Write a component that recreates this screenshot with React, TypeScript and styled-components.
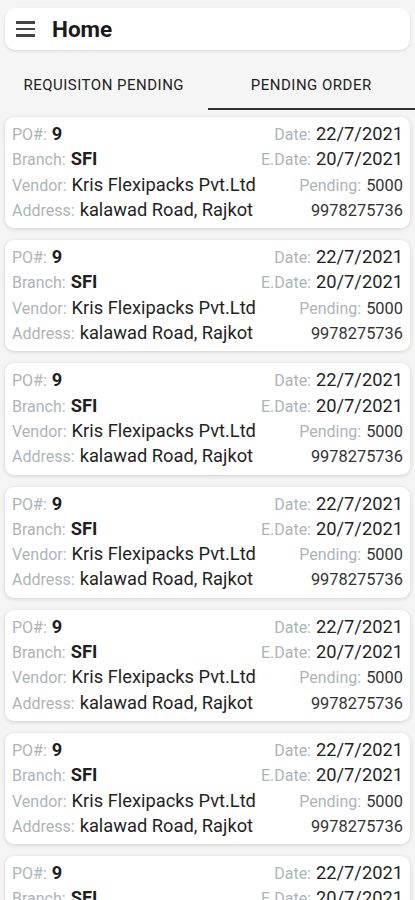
import styled, { createGlobalStyle } from "styled-components";

const GlobalStyle = createGlobalStyle`
    body {
        margin: 0;
        background: #f5f5f5;
        font-family: Roboto, "Liberation Sans", sans-serif;
    }
`;

type Order = {
    po: string;
    branch: string;
    vendor: string;
    address: string;
    date: string;
    eDate: string;
    pending: string;
    phone: string;
};

const orders: Order[] = Array.from({ length: 7 }, () => ({
    po: "9",
    branch: "SFI",
    vendor: "Kris Flexipacks Pvt.Ltd",
    address: "kalawad Road, Rajkot",
    date: "22/7/2021",
    eDate: "20/7/2021",
    pending: "5000",
    phone: "9978275736",
}));

const App = () => {
    return (
        <>
            <GlobalStyle />
            <Page>
                <TopBar>
                    <Burger>
                        <span />
                        <span />
                        <span />
                    </Burger>
                    <Title>Home</Title>
                </TopBar>
                <Tabs>
                    <Tab>REQUISITON PENDING</Tab>
                    <Tab active>PENDING ORDER</Tab>
                </Tabs>
                <List>
                    {orders.map((o, i) => (
                        <Card key={i}>
                            <Row>
                                <Field>
                                    <Label>PO#:</Label>
                                    <Value bold>{o.po}</Value>
                                </Field>
                                <Field>
                                    <Label>Date:</Label>
                                    <Value>{o.date}</Value>
                                </Field>
                            </Row>
                            <Row>
                                <Field>
                                    <Label>Branch:</Label>
                                    <Value bold>{o.branch}</Value>
                                </Field>
                                <Field>
                                    <Label>E.Date:</Label>
                                    <Value>{o.eDate}</Value>
                                </Field>
                            </Row>
                            <Row>
                                <Field>
                                    <Label>Vendor:</Label>
                                    <Value>{o.vendor}</Value>
                                </Field>
                                <Field>
                                    <Label>Pending:</Label>
                                    <Value small>{o.pending}</Value>
                                </Field>
                            </Row>
                            <Row>
                                <Field>
                                    <Label>Address:</Label>
                                    <Value>{o.address}</Value>
                                </Field>
                                <Field>
                                    <Value small>{o.phone}</Value>
                                </Field>
                            </Row>
                        </Card>
                    ))}
                </List>
            </Page>
        </>
    );
};

const Page = styled.div`
    width: 100%;
    height: 900px;
    overflow: hidden;
    padding-top: 8px;
    box-sizing: border-box;
`;

const TopBar = styled.div`
    display: flex;
    align-items: center;
    gap: 17px;
    height: 42px;
    margin: 0 5px;
    padding: 0 11px;
    background: #fff;
    border-radius: 10px;
    box-shadow: 0 1px 3px rgba(0, 0, 0, 0.12);
`;

const Burger = styled.div`
    display: flex;
    flex-direction: column;
    gap: 4px;
    width: 19px;

    span {
        display: block;
        height: 2.5px;
        background: #444;
    }
`;

const Title = styled.h1`
    margin: 0;
    font-size: 22.5px;
    font-weight: 700;
    color: #1a1a1a;
`;

const Tabs = styled.div`
    display: flex;
    height: 60px;
`;

const Tab = styled.div<{ active?: boolean }>`
    flex: 1;
    display: flex;
    align-items: center;
    justify-content: center;
    padding-top: 12px;
    font-size: 15px;
    font-weight: 400;
    letter-spacing: 0.5px;
    color: #222;
    border-bottom: 2px solid ${(p) => (p.active ? "#333" : "transparent")};
`;

const List = styled.div`
    display: flex;
    flex-direction: column;
    gap: 12px;
    margin: 7px 5px 0;
`;

const Card = styled.div`
    display: flex;
    flex-direction: column;
    padding: 6px 7px 4px;
    background: #fff;
    border-radius: 9px;
    box-shadow: 0 1px 4px rgba(0, 0, 0, 0.15);
`;

const Row = styled.div`
    display: flex;
    justify-content: space-between;
    align-items: baseline;
    height: 25.3px;
`;

const Field = styled.div`
    display: flex;
    align-items: baseline;
    gap: 5px;
`;

const Label = styled.span`
    font-size: 16px;
    color: #acb4ba;
`;

const Value = styled.span<{ bold?: boolean; small?: boolean }>`
    font-size: ${(p) => (p.small ? "16.4px" : "18.3px")};
    font-weight: ${(p) => (p.bold ? 700 : 400)};
    color: ${(p) => (p.small ? "#333" : "#1f1f1f")};
`;

export default App;
